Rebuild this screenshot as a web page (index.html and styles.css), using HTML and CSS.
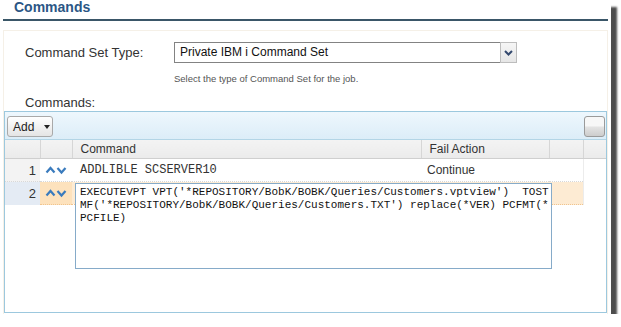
FILE: index.html
```html
<!DOCTYPE html>
<html lang="en">
<head>
    <meta charset="UTF-8">
    <meta name="viewport" content="width=device-width, initial-scale=1.0">
    <link rel="stylesheet" href="styles.css">
    <title>Commands</title>
</head>
<body>
    <div class="window">
        <h2 class="title">Commands</h2>

        <div class="panel">
            <div class="field">
                <label class="field-label">Command Set Type:</label>
                <div class="field-input">
                    <div class="select">
                        <span class="select-value">Private IBM i Command Set</span>
                        <span class="select-btn">
                            <svg width="9" height="6" viewBox="0 0 9 6"><path d="M1 1 L4.5 4.5 L8 1" fill="none" stroke="#34496e" stroke-width="2"/></svg>
                        </span>
                    </div>
                    <p class="hint">Select the type of Command Set for the job.</p>
                </div>
            </div>

            <div class="section-label">Commands:</div>

            <div class="grid">
                <div class="toolbar">
                    <button class="btn btn-add">Add <span class="caret"></span></button>
                    <button class="btn btn-square"></button>
                </div>
                <table class="cmd-table">
                    <colgroup>
                        <col style="width: 35px">
                        <col style="width: 32px">
                        <col style="width: 349px">
                        <col style="width: 128px">
                        <col style="width: 34px">
                        <col>
                    </colgroup>
                    <thead>
                        <tr>
                            <th class="num"></th>
                            <th></th>
                            <th>Command</th>
                            <th>Fail Action</th>
                            <th></th>
                            <th></th>
                        </tr>
                    </thead>
                    <tbody>
                        <tr>
                            <td class="num">1</td>
                            <td class="move">
                                <svg width="22" height="10" viewBox="0 0 22 10"><path d="M1.5 7.5 L5.5 3 L9.5 7.5 M12.5 3 L16.5 7.5 L20.5 3" fill="none" stroke="#3a7bbd" stroke-width="2.2"/></svg>
                            </td>
                            <td class="cmd">ADDLIBLE SCSERVER10</td>
                            <td>Continue</td>
                            <td></td>
                            <td class="blank"></td>
                        </tr>
                        <tr class="editing">
                            <td class="num">2</td>
                            <td class="move">
                                <svg width="22" height="10" viewBox="0 0 22 10"><path d="M1.5 7.5 L5.5 3 L9.5 7.5 M12.5 3 L16.5 7.5 L20.5 3" fill="none" stroke="#3a7bbd" stroke-width="2.2"/></svg>
                            </td>
                            <td class="cmd">
                                <textarea class="editor" wrap="off" spellcheck="false">EXECUTEVPT VPT('*REPOSITORY/BobK/BOBK/Queries/Customers.vptview')  TOST
MF('*REPOSITORY/BobK/BOBK/Queries/Customers.TXT') replace(*VER) PCFMT(*
PCFILE)</textarea>
                            </td>
                            <td></td>
                            <td></td>
                            <td class="blank"></td>
                        </tr>
                    </tbody>
                </table>
            </div>
        </div>
    </div>
</body>
</html>
```

FILE: styles.css
```css
body {
    margin: 0;
    background-color: #fff;
    font-family: "Liberation Sans", Arial, sans-serif;
    color: #333;
}

.window {
    width: 611px;
    height: 314px;
    background: #fff;
    box-shadow: 6px 7px 2px #4d4d4d;
    overflow: hidden;
}

.title {
    margin: 0 3px;
    padding: 0 0 5px 11px;
    font-size: 14px;
    line-height: 14px;
    font-weight: bold;
    color: #2b5685;
    border-bottom: 2px solid #3a5668;
}

.panel {
    margin: 9px 3px 0;
    height: 290px;
    border: 1px solid #f5f0e7;
    border-bottom: none;
}

.field {
    display: flex;
    padding: 11px 0 0 21px;
}

.field-label {
    width: 149px;
    font-size: 13px;
    line-height: 19px;
    padding-top: 1px;
}

.select {
    display: flex;
    width: 343px;
    height: 21px;
    box-sizing: border-box;
}

.select-value {
    flex: 1;
    border: 1px solid #838383;
    border-right: none;
    padding: 0 5px;
    font-size: 12px;
    line-height: 19px;
    color: #111;
}

.select-btn {
    width: 17px;
    display: flex;
    align-items: center;
    justify-content: center;
    border: 1px solid #bdbdbd;
    background: linear-gradient(#f6f6f6, #e6e6e6);
    box-sizing: border-box;
}

.hint {
    margin: 10px 0 0;
    font-size: 9.5px;
    line-height: 12px;
    color: #555;
}

.section-label {
    padding: 10px 0 0 21px;
    font-size: 13px;
    line-height: 16px;
}

.grid {
    width: 603px;
    height: 202px;
    box-sizing: border-box;
    border: 1px solid #9cc8de;
}

.toolbar {
    display: flex;
    justify-content: space-between;
    align-items: flex-start;
    height: 28px;
    padding: 4px 1px 0 2px;
    box-sizing: border-box;
    background: linear-gradient(#eef7fd, #dcedf8);
    border-bottom: 1px solid #b3d5e6;
}

.btn {
    height: 21px;
    border: 1px solid #a9a9a9;
    border-radius: 3px;
    background: linear-gradient(#ffffff, #e4e4e4);
    font-family: "Liberation Sans", Arial, sans-serif;
    font-size: 12px;
    color: #222;
    padding: 0;
}

.btn-add {
    width: 46px;
    text-align: left;
    padding-left: 5px;
}

.caret {
    display: inline-block;
    margin-left: 6px;
    vertical-align: 2px;
    border-left: 3px solid transparent;
    border-right: 3px solid transparent;
    border-top: 4px solid #222;
}

.btn-square {
    width: 21px;
    border-color: #9a9a9a;
    background: linear-gradient(#f7f7f7 45%, #e2e2e2 55%, #cdcdcd);
}

.cmd-table {
    width: 100%;
    border-collapse: collapse;
    table-layout: fixed;
    font-size: 12px;
}

.cmd-table th {
    height: 18px;
    padding: 0 0 0 8px;
    text-align: left;
    font-weight: normal;
    color: #333;
    background: linear-gradient(#f3f3f3, #ebebeb);
    border-left: 1px solid #d6d6d6;
    border-bottom: 1px solid #cfcfcf;
}

.cmd-table th:first-child {
    border-left: none;
}

.cmd-table td {
    height: 20px;
    padding: 0 0 0 6px;
    border-bottom: 1px dotted #d8d8d8;
}

.cmd-table td.num {
    padding: 0 4px 0 0;
    text-align: right;
    background: #f3f3f3;
    font-size: 13px;
}

.cmd-table td.move {
    padding: 2px 0 0 5px;
}

.cmd-table td.cmd {
    font-family: "Liberation Mono", "Courier New", monospace;
    padding-left: 8px;
    position: relative;
}

.cmd-table td.blank {
    border-left: 1px solid #ececec;
    border-bottom: none;
}

.editing td {
    background: #fdebd3;
    border-top: 1px dotted #f0c48e;
    border-bottom: 1px dotted #f0c48e;
}

.editing td.num {
    background: #e4ebf4;
    border-color: #e4ebf4;
}

.editing td.move {
    background: #fde2bd;
}

.editing td.blank {
    background: #fff;
    border-top: none;
    border-bottom: none;
}

.editor {
    position: absolute;
    left: 3px;
    top: 1px;
    width: 477px;
    height: 86px;
    box-sizing: border-box;
    margin: 0;
    padding: 2px 2px 0 4px;
    border: 1px solid #86abc9;
    background: #fff;
    font-family: "Liberation Mono", "Courier New", monospace;
    font-size: 11px;
    line-height: 13px;
    color: #111;
    resize: none;
    overflow: hidden;
    outline: none;
}
```
